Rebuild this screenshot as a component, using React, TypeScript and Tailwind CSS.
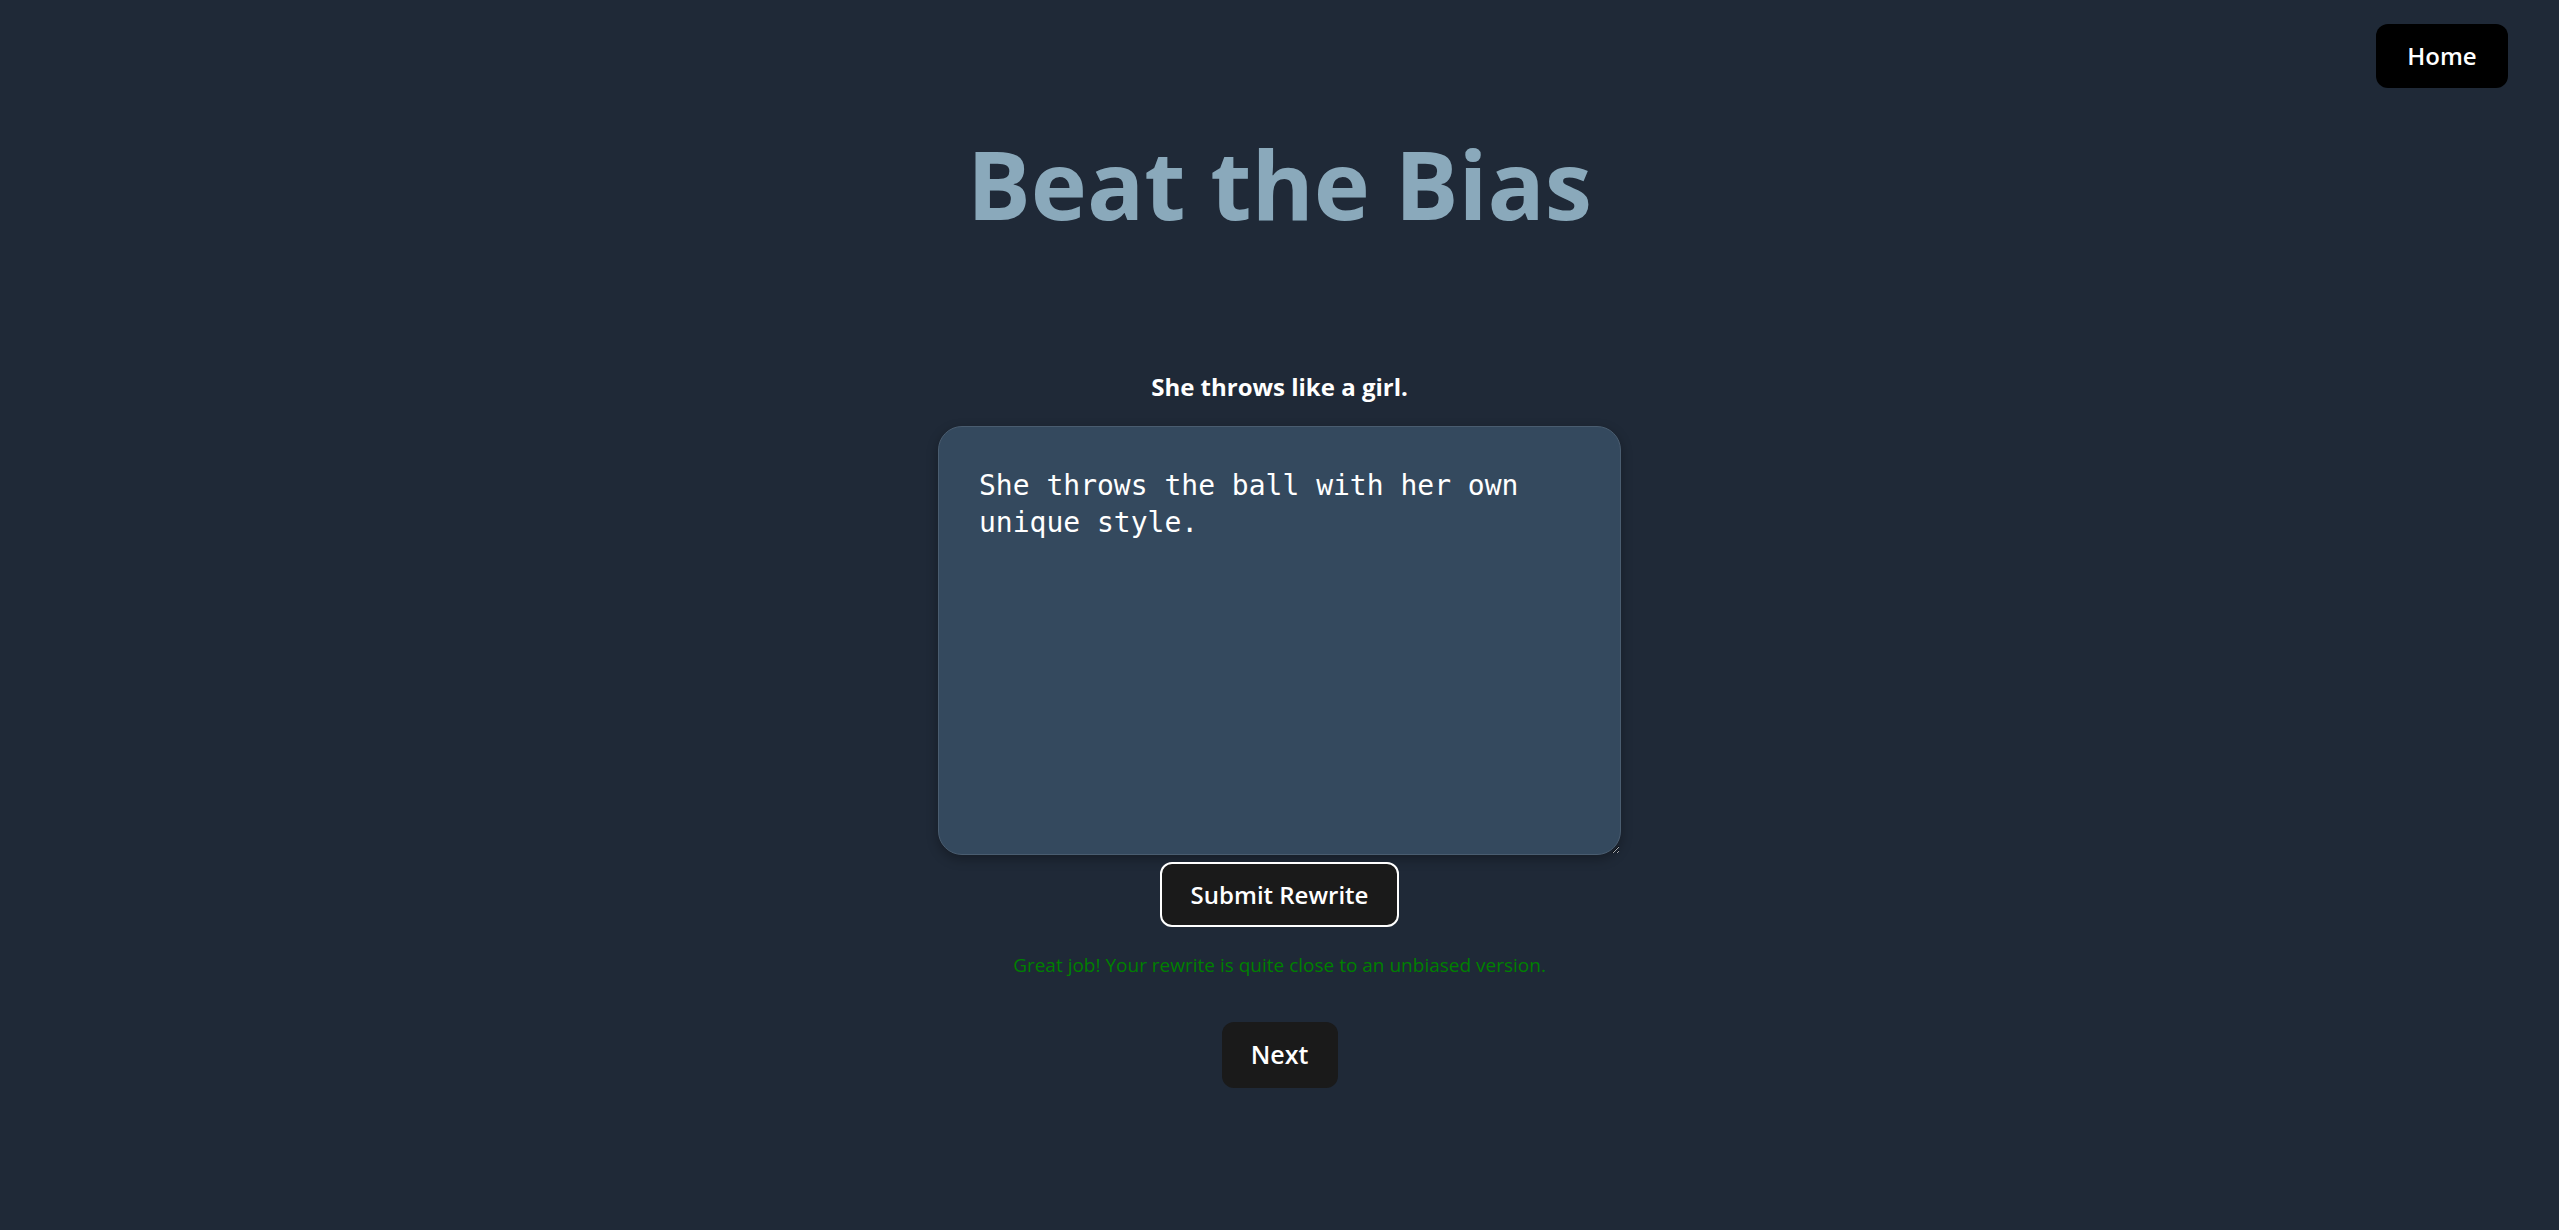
export default function App() {
  return (
    <div className="min-h-screen w-full bg-[#1f2937] font-['Segoe_UI','Open_Sans',sans-serif] text-white">
      {/* Top nav */}
      <div className="flex justify-end pt-6 pr-[51px]">
        <button className="h-[64px] w-[132px] rounded-xl bg-black text-[24px] font-semibold text-white">
          Home
        </button>
      </div>

      <div className="flex flex-col items-center">
        <h1 className="mt-[38px] text-[95px] font-bold leading-[1.2] text-[#8aa9bb]">Beat the Bias</h1>

        <p className="mt-[131px] text-[24px] font-bold leading-[1.3]">She throws like a girl.</p>

        <textarea
          className="mt-[24px] h-[429px] w-[683px] rounded-[24px] border border-[#4a5d70] bg-[#34495e] px-10 py-[40px] font-['Consolas','DejaVu_Sans_Mono',monospace] text-[28px] leading-[37px] text-white shadow-[0_4px_12px_rgba(0,0,0,0.3)] outline-none"
          defaultValue="She throws the ball with her own unique style."
        />

        <button className="mt-[7px] h-[65px] w-[239px] rounded-xl border-2 border-white bg-[#1a1a1a] text-[24px] font-semibold">
          Submit Rewrite
        </button>

        <p className="mt-[24px] text-[19px] text-[#008000]">
          Great job! Your rewrite is quite close to an unbiased version.
        </p>

        <button className="mt-[42px] h-[66px] w-[116px] rounded-xl bg-[#1a1a1a] text-[25px] font-semibold">
          Next
        </button>
      </div>
    </div>
  )
}
